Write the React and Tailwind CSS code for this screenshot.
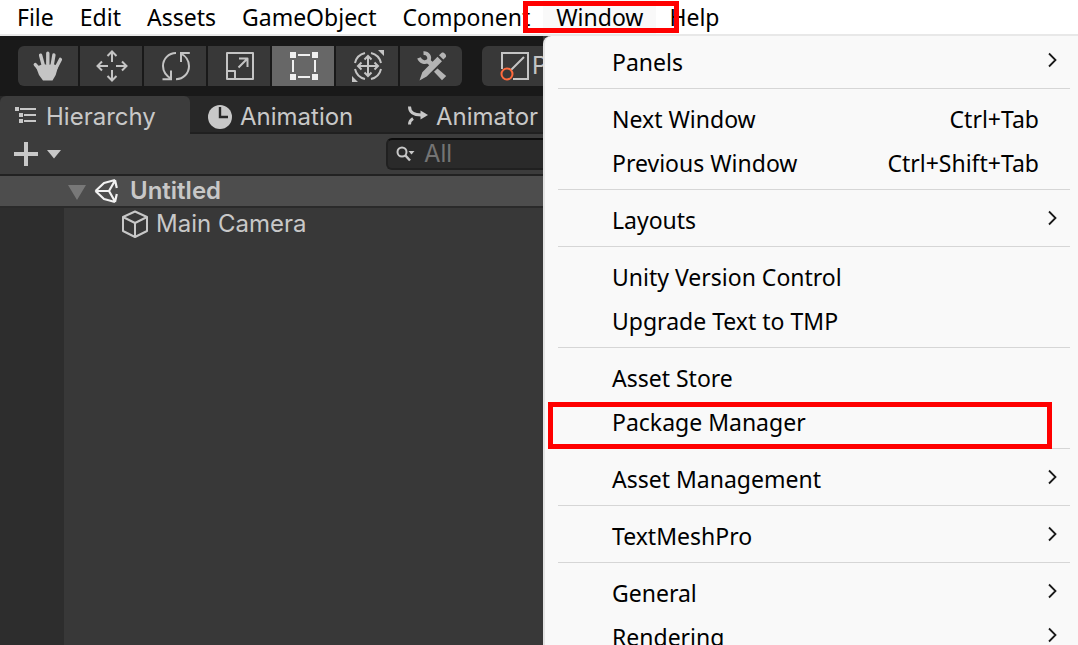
import React from 'react';

const topMenus = ['File', 'Edit', 'Assets', 'GameObject', 'Component', 'Window', 'Help'];

const menuGroups = [
  [{ label: 'Panels', sub: true }],
  [
    { label: 'Next Window', keys: 'Ctrl+Tab' },
    { label: 'Previous Window', keys: 'Ctrl+Shift+Tab' },
  ],
  [{ label: 'Layouts', sub: true }],
  [{ label: 'Unity Version Control' }, { label: 'Upgrade Text to TMP' }],
  [{ label: 'Asset Store' }, { label: 'Package Manager', marked: true }],
  [{ label: 'Asset Management', sub: true }],
  [{ label: 'TextMeshPro', sub: true }],
  [
    { label: 'General', sub: true },
    { label: 'Rendering', sub: true },
  ],
];

const line = { fill: 'none', stroke: 'currentColor', strokeWidth: 2 };

function HandIcon() {
  return (
    <svg width="32" height="32" viewBox="0 0 32 32" aria-hidden="true">
      <g fill="none" stroke="#c4c4c4" strokeWidth="3.4" strokeLinecap="round">
        <path d="M11.5 16 8.600 5.200M15.800 14V3.200M20.200 15l1.700-10M24 18l4.400-8.600M9 21 3.300 14.600" />
      </g>
      <path fill="#c4c4c4" d="M9.700 14.500h12.600l4 1.500-2.600 9-3.200 5.500H11L7 25 4 17z" />
    </svg>
  );
}

function MoveIcon() {
  return (
    <svg width="32" height="32" viewBox="0 0 32 32" aria-hidden="true">
      <path {...line} d="M16 12V1.500M11.500 6 16 1.500 20.500 6M16 20v10.500M11.500 26l4.500 4.500 4.500-4.500M12 16H1.500M6 11.500 1.500 16 6 20.500M20 16h10.500M26 11.500l4.500 4.500-4.500 4.500" />
    </svg>
  );
}

function RotateIcon() {
  return (
    <svg width="32" height="32" viewBox="0 0 32 32" aria-hidden="true">
      <path {...line} d="M16 3C8.500 3 3 9 3 16c0 5.500 3.500 10 8.500 13M2.500 29.200H11V20.500M16 29.200c7.500 0 13-6 13-13.200 0-5.500-3.500-10-8-12.500M29.800 3H21v9" />
    </svg>
  );
}

function ScaleIcon() {
  return (
    <svg width="32" height="32" viewBox="0 0 32 32" aria-hidden="true">
      <path {...line} strokeLinejoin="round" d="M3 3h26v26H3zM3 21h8v8M14.500 17.500 23 9M15 8.500h8.500V17" />
    </svg>
  );
}

function RectIcon() {
  return (
    <svg width="32" height="32" viewBox="0 0 32 32" aria-hidden="true">
      <path fill="#f0f0f0" d="M2 2h6v6H2zM24 2h6v6h-6zM2 24h6v6H2zM24 24h6v6h-6zM10 4h12v2H10zM10 26h12v2H10zM4 10h2v12H4zM26 10h2v12h-2z" />
    </svg>
  );
}

function TransformIcon() {
  return (
    <svg width="34" height="34" viewBox="0 0 34 34" aria-hidden="true">
      <path {...line} d="M14 4A13.300 13.300 0 0 0 4 14M4 20A13.300 13.300 0 0 0 14 30M20 30A13.300 13.300 0 0 0 30 20M30 14A13.300 13.300 0 0 0 20 4" />
      <path {...line} d="M17 7v20M7 17h20M13.500 10.500 17 7l3.500 3.500M13.500 23.500 17 27l3.500-3.500M10.500 13.500 7 17l3.500 3.500M23.500 13.500 27 17l-3.500 3.500" />
      <path fill="currentColor" d="M27 1h6v6zM1 27v6h6z" />
    </svg>
  );
}

function ToolsIcon() {
  return (
    <svg width="32" height="32" viewBox="0 0 32 32" aria-hidden="true">
      <path d="M7.500 3.200c4.500-.2 6.800 3.500 5.200 7.300C9.500 13.500 4.500 12 3 7.800" fill="none" stroke="currentColor" strokeWidth="3.800" />
      <path fill="currentColor" d="M12.500 8.500l5 4-3.500 3.500-4.500-4.200zM21.500 18.500l8.700 7.600-4.200 4.200-8-8.500z" />
      <path fill="currentColor" d="M21.500 6.800 26 11.200 10.700 26.400 3.500 30.500l2.800-8.300zM23 5.200l2.700-2.500c2-1 5.200 2 4.200 4.200l-2.500 2.700z" />
    </svg>
  );
}

const tools = [
  { name: 'Hand', Icon: HandIcon, look: 'w-15 rounded-l-md bg-[#383838] text-[#c4c4c4]' },
  { name: 'Move', Icon: MoveIcon, look: 'w-[62px] pl-0.5 bg-[#383838] text-[#c4c4c4]' },
  { name: 'Rotate', Icon: RotateIcon, look: 'w-[62px] pl-0.5 bg-[#383838] text-[#c4c4c4]' },
  { name: 'Scale', Icon: ScaleIcon, look: 'w-[62px] pl-0.5 bg-[#383838] text-[#c4c4c4]' },
  { name: 'Rect', Icon: RectIcon, look: 'w-[62px] pl-0.5 bg-[#676767] text-[#f0f0f0]' },
  { name: 'Transform', Icon: TransformIcon, look: 'w-[62px] pl-0.5 bg-[#383838] text-[#c4c4c4]' },
  { name: 'Custom tools', Icon: ToolsIcon, look: 'w-[62px] pl-0.5 rounded-r-md bg-[#383838] text-[#b4b4b4]' },
];

function MenuBar() {
  return (
    <nav className="flex h-9 border-b-2 border-[#e8e8e8] bg-white pl-1 text-black">
      {topMenus.map((name) => (
        <button
          key={name}
          type="button"
          className={`relative h-[34px] px-[13px] ${name === 'Window' ? 'bg-[#f9f9f9]' : ''}`}
        >
          {name}
          {name === 'Window' && (
            <span className="pointer-events-none absolute top-px -right-[23px] z-20 h-8 w-[156px] border-5 border-[#ff0000]" />
          )}
        </button>
      ))}
    </nav>
  );
}

function Toolbar() {
  return (
    <div className="flex h-15 gap-5 bg-[#191919] px-[18px] pt-2.5">
      <div className="flex shrink-0 gap-0.5">
        {tools.map(({ name, Icon, look }) => (
          <button key={name} type="button" aria-label={name} className={`flex h-10 items-center justify-center ${look}`}>
            <Icon />
          </button>
        ))}
      </div>
      <button type="button" className="flex h-10 shrink-0 items-center gap-0.5 rounded-md bg-[#383838] px-4 text-[#c4c4c4]">
        <svg width="32" height="32" viewBox="0 0 32 32" aria-hidden="true">
          <path {...line} d="M4 19V3h26v26H15M13 20 26 7" />
          <circle cx="9" cy="24" r="5.500" fill="none" stroke="#ff6a3d" strokeWidth="2" />
        </svg>
        Pivot
      </button>
    </div>
  );
}

function Tabs() {
  return (
    <div role="tablist" className="flex h-[38px] bg-[#282828]">
      <button type="button" role="tab" aria-selected="true" className="flex w-[190px] shrink-0 items-center gap-2 rounded-t-md bg-[#3c3c3c] pt-1 pl-3.5">
        <svg width="24" height="24" viewBox="0 0 24 24" aria-hidden="true">
          <path stroke="currentColor" strokeWidth="2" d="M6 4h16M10 10h12M10 16h12" />
          <path fill="currentColor" d="M1 2h4v4H1zM5 8h4v4H5zM5 14h4v4H5z" />
        </svg>
        Hierarchy
      </button>
      <button type="button" role="tab" aria-selected="false" className="flex w-[200px] shrink-0 items-center gap-2 border-b-2 border-[#202020] pt-1.5 pl-[18px]">
        <svg width="24" height="24" viewBox="0 0 24 24" aria-hidden="true">
          <circle cx="12" cy="12" r="12" fill="currentColor" />
          <path d="M12 2v10h8" fill="none" stroke="#282828" strokeWidth="2.400" />
        </svg>
        Animation
      </button>
      <button type="button" role="tab" aria-selected="false" className="flex grow items-center gap-2 border-b-2 border-[#202020] pt-1.5 pl-4">
        <svg width="22" height="22" viewBox="0 0 22 22" aria-hidden="true">
          <path d="M3.500 .5c0 5.500 4 8.500 12 8.500M3.500 18.500c0-3 1-4.500 3.500-6" fill="none" stroke="currentColor" strokeWidth="3" />
          <path fill="currentColor" d="M14.500 4.500 22 9l-7.500 4.500z" />
        </svg>
        Animator
      </button>
    </div>
  );
}

function Hierarchy() {
  return (
    <section className="flex grow flex-col">
      <div className="flex h-[42px] shrink-0 items-center justify-between border-b-2 border-[#222222] bg-[#3c3c3c] pl-3.5">
        <button type="button" aria-label="Create" className="flex items-center gap-2 text-[#c8c8c8]">
          <svg width="24" height="24" viewBox="0 0 24 24" aria-hidden="true">
            <path fill="currentColor" d="M10 0h4v10h10v4H14v10h-4V14H0v-4h10z" />
          </svg>
          <svg width="16" height="10" viewBox="0 0 16 10" aria-hidden="true">
            <path fill="currentColor" d="M1 1h14L8 9.500z" />
          </svg>
        </button>
        <label className="flex h-8 w-[157px] items-center gap-2 rounded-l-md border-2 border-r-0 border-[#202020] border-t-[#0d0d0d] bg-[#2a2a2a] pl-2">
          <svg width="20" height="16" viewBox="0 0 20 16" className="shrink-0" aria-hidden="true">
            <circle cx="6" cy="6" r="4.500" fill="none" stroke="#c8c8c8" strokeWidth="2" />
            <path d="M9 9l5 5.500" stroke="#c8c8c8" strokeWidth="2.500" />
            <path d="M12.500 5h6l-3 3.500z" fill="#c8c8c8" />
          </svg>
          <input aria-label="Search" placeholder="All" className="w-full min-w-0 bg-transparent outline-none placeholder:text-[#747474]" />
        </label>
      </div>
      <div className="flex h-8 shrink-0 items-center border-b-2 border-[#2a2a2a] bg-[#4d4d4d] pl-[67px] font-semibold">
        <svg width="20" height="18" viewBox="0 0 20 18" aria-hidden="true">
          <path fill="#787878" d="M1 3h18l-9 15z" />
        </svg>
        <svg width="26" height="26" viewBox="0 0 26 26" className="mr-[11px] ml-1.5" aria-hidden="true">
          <path
            d="M2.500 13 11 5l11-3M2.500 13 11 21l11 3M22 2l1.800 8M22 24l1.800-8M2.500 13H16M16 13l6-10.500M16 13l6 10.500"
            fill="none"
            stroke="#f2f2f2"
            strokeWidth="2.200"
            strokeLinejoin="round"
          />
        </svg>
        Untitled
      </div>
      <div className="flex grow">
        <div className="w-16 shrink-0 bg-[#2d2d2d]" />
        <div className="grow bg-[#383838] pl-[57px]">
          <div className="flex h-[31px] items-center gap-[7px]">
            <svg width="28" height="28" viewBox="0 0 28 28" aria-hidden="true">
              <path {...line} strokeLinejoin="round" d="M14 1.500 26 7v14l-12 6L2 21V7zM2 7l12 6 12-6M14 13v14" />
            </svg>
            Main Camera
          </div>
        </div>
      </div>
    </section>
  );
}

function WindowMenu() {
  return (
    <div role="menu" className="absolute top-9 right-0 bottom-0 left-[543px] z-10 overflow-hidden rounded-tl-lg border-l-2 border-[#e4e4e4] bg-[#f9f9f9] pt-1 text-black">
      {menuGroups.map((group, i) => (
        <div key={group[0].label}>
          {i > 0 && <hr className="mt-1 mr-2 mb-2 ml-[13px] border-[#d6d6d6]" />}
          {group.map(({ label, keys, sub, marked }) => (
            <button key={label} type="button" role="menuitem" className="relative flex h-11 w-full items-center justify-between pr-[39px] pl-[67px]">
              <span>{label}</span>
              {keys && <span>{keys}</span>}
              {sub && (
                <svg width="12" height="18" viewBox="0 0 12 18" className="-mr-5 mb-1" aria-hidden="true">
                  <path d="M2 2.500 8.500 9 2 15.500" fill="none" stroke="#1a1a1a" strokeWidth="1.800" />
                </svg>
              )}
              {marked && (
                <span className="pointer-events-none absolute top-0.5 right-[26px] left-[3px] h-[47px] border-5 border-[#ff0000]" />
              )}
            </button>
          ))}
        </div>
      ))}
    </div>
  );
}

export default function App() {
  return (
    <div className="relative flex h-screen flex-col overflow-hidden bg-[#383838] font-['Noto_Sans','Open_Sans',sans-serif] text-[23px] leading-8">
      <MenuBar />
      <main className="flex w-[543px] grow flex-col font-[Inter,sans-serif] text-2xl leading-8 text-[#c8c8c8]">
        <Toolbar />
        <Tabs />
        <Hierarchy />
      </main>
      <WindowMenu />
    </div>
  );
}
